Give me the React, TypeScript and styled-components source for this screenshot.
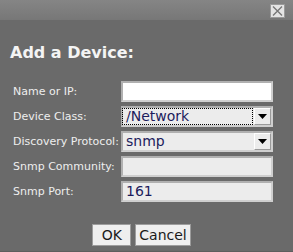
import React from "react";
import styled, { createGlobalStyle } from "styled-components";

const GlobalStyle = createGlobalStyle`
  html, body {
    margin: 0;
    padding: 0;
    background: #6a6a6a;
  }
  body {
    font-family: "DejaVu Sans", sans-serif;
  }
`;

const Dialog = styled.div`
  width: 293px;
  height: 252px;
  background: #6a6a6a;
  display: flex;
  flex-direction: column;
  box-sizing: border-box;
  border-bottom: 1px solid #5e5e5e;
`;

const TitleBar = styled.div`
  height: 20px;
  background: linear-gradient(#858585, #777777);
  display: flex;
  justify-content: flex-end;
  align-items: center;
  padding-right: 8px;
`;

const CloseButton = styled.button`
  width: 15px;
  height: 14px;
  padding: 0;
  margin-top: 1px;
  border: 1px solid #9a9a9a;
  background: #e4e4e4;
  display: flex;
  align-items: center;
  justify-content: center;
`;

const Title = styled.h1`
  margin: 23px 0 0 10px;
  font-size: 16px;
  font-weight: bold;
  color: #f4f4f4;
  line-height: 20px;
`;

const Form = styled.div`
  display: grid;
  grid-template-columns: 108px 152px;
  row-gap: 4px;
  margin: 18px 0 0 13px;
  align-items: center;
`;

const Label = styled.label`
  font-size: 11px;
  color: #eeeeee;
  white-space: nowrap;
`;

const Field = styled.div<{ $bg: string }>`
  height: 21px;
  box-sizing: border-box;
  border: 2px solid #cfcfcf;
  border-top-color: #b0b0b0;
  border-left-color: #b0b0b0;
  background: ${({ $bg }) => $bg};
  display: flex;
  align-items: center;
  font-size: 14px;
  color: #1c1c5c;
`;

const Value = styled.span<{ $focus?: boolean }>`
  flex: 1;
  padding-left: 3px;
  height: 15px;
  line-height: 15px;
  margin-right: 2px;
  outline: ${({ $focus }) => ($focus ? "1px dotted #000" : "none")};
`;

const Arrow = styled.div`
  width: 17px;
  height: 17px;
  box-sizing: border-box;
  border: 1px solid #ffffff;
  border-right-color: #9a9a9a;
  border-bottom-color: #9a9a9a;
  background: #ececec;
  display: flex;
  align-items: center;
  justify-content: center;
`;

const Buttons = styled.div`
  display: flex;
  justify-content: center;
  gap: 4px;
  margin-top: 22px;
  padding-right: 10px;
`;

const Button = styled.button`
  height: 22px;
  min-width: 39px;
  padding: 0 3px;
  border: 1px solid #9c9c9c;
  background: #eeeeee;
  color: #1a1a1a;
  font-family: "DejaVu Sans", sans-serif;
  font-size: 14px;
  line-height: 18px;
`;

const Triangle = () => (
  <svg width="9" height="5" viewBox="0 0 9 5">
    <path d="M0 0 H9 L4.5 5 Z" fill="#000" />
  </svg>
);

const rows: { label: string; value?: string; bg: string; select?: boolean; focus?: boolean }[] = [
  { label: "Name or IP:", bg: "#ffffff" },
  { label: "Device Class:", value: "/Network", bg: "#ececec", select: true, focus: true },
  { label: "Discovery Protocol:", value: "snmp", bg: "#ececec", select: true },
  { label: "Snmp Community:", bg: "#ececec" },
  { label: "Snmp Port:", value: "161", bg: "#ececec" },
];

export default function App() {
  return (
    <>
      <GlobalStyle />
      <Dialog>
        <TitleBar>
          <CloseButton aria-label="close">
            <svg width="11" height="10" viewBox="0 0 11 10">
              <path d="M1 0.5 L10 9.5 M10 0.5 L1 9.5" stroke="#777" strokeWidth="1.4" />
            </svg>
          </CloseButton>
        </TitleBar>
        <Title>Add a Device:</Title>
        <Form>
          {rows.map((r) => (
            <React.Fragment key={r.label}>
              <Label>{r.label}</Label>
              <Field $bg={r.bg}>
                <Value $focus={r.focus}>{r.value}</Value>
                {r.select && (
                  <Arrow>
                    <Triangle />
                  </Arrow>
                )}
              </Field>
            </React.Fragment>
          ))}
        </Form>
        <Buttons>
          <Button>OK</Button>
          <Button>Cancel</Button>
        </Buttons>
      </Dialog>
    </>
  );
}
